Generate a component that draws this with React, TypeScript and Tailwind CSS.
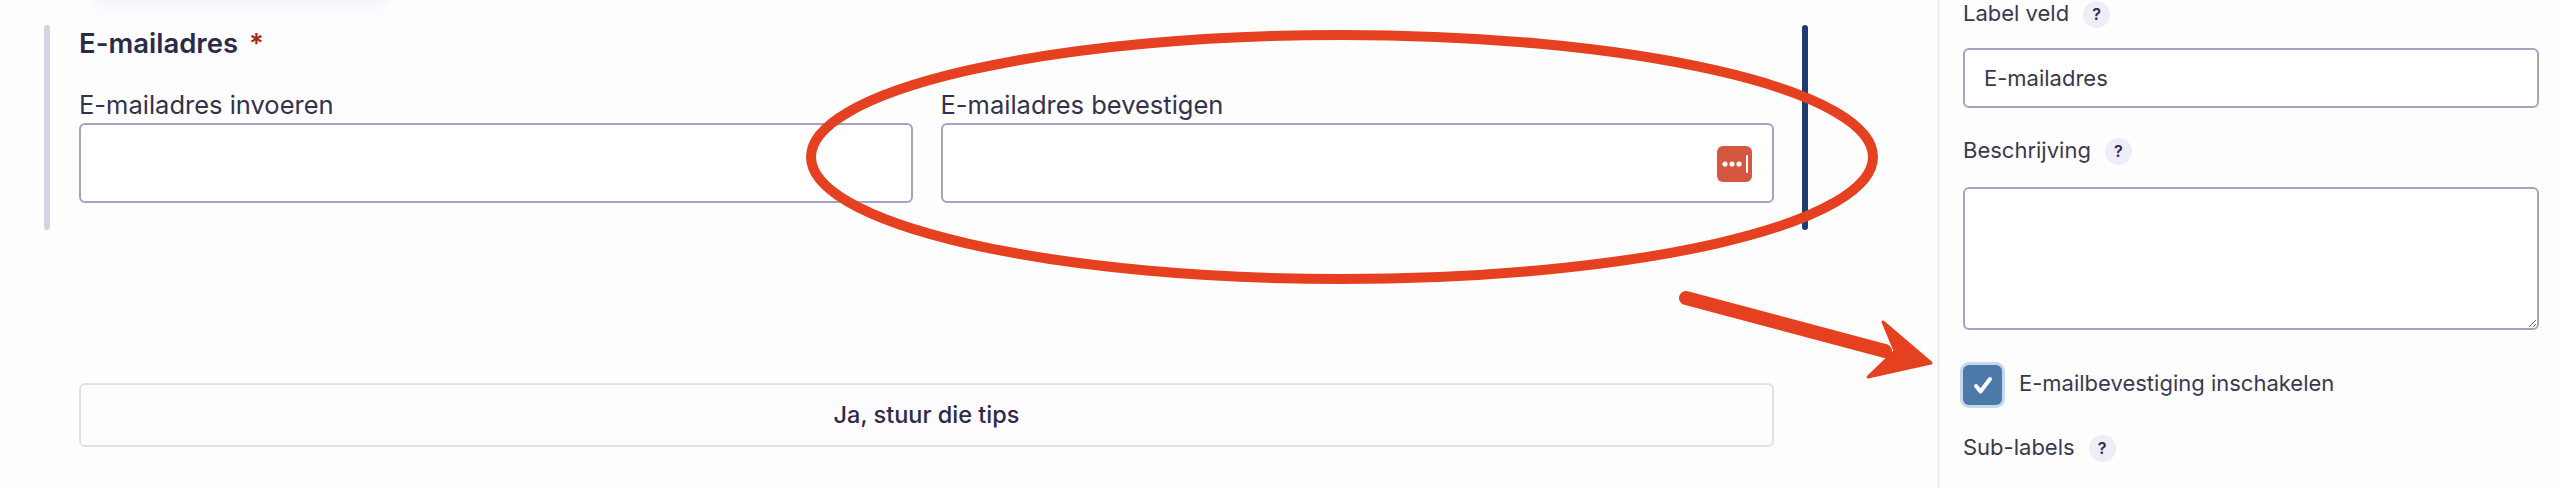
const font = "font-['Inter',sans-serif]";

function HelpBadge() {
  return (
    <span className="ml-[14px] flex h-[27px] w-[27px] items-center justify-center rounded-full bg-[#eeedf8] text-[16px] font-semibold text-[#2c2a4a]">
      ?
    </span>
  );
}

function SideLabel({ children }: { children: string }) {
  return (
    <div className="flex h-[27px] items-center text-[22px] leading-[27px] text-[#3a3850]">
      <span className="-mt-[2px]">{children}</span>
      <HelpBadge />
    </div>
  );
}

function EmailField({ label, manager }: { label: string; manager?: boolean }) {
  return (
    <div>
      <label className="block text-[25.5px] leading-[32px] text-[#33314e]">{label}</label>
      <div className="relative mt-[2px]">
        <input
          readOnly
          className="block h-[80px] w-full rounded-[6px] border-2 border-[#a5a3c2] bg-white"
        />
        {manager && (
          <svg
            viewBox="0 0 35 36"
            className="absolute right-[22px] top-[23px] h-[36px] w-[35px]"
          >
            <rect width="35" height="36" rx="6" fill="#d5573f" />
            <circle cx="8" cy="18" r="2.6" fill="#fff" />
            <circle cx="15" cy="18" r="2.6" fill="#fff" />
            <circle cx="22" cy="18" r="2.6" fill="#fff" />
            <rect x="29" y="9" width="2" height="18" fill="#fff" />
          </svg>
        )}
      </div>
    </div>
  );
}

export default function App() {
  return (
    <div className={`${font} relative flex h-[488px] w-[2560px] overflow-hidden bg-[#fefefe]`}>
      {/* faint shadow of the card scrolled off the top */}
      <div className="absolute left-[90px] top-[-24px] h-[30px] w-[300px] rounded-full bg-[#f3f0fa] blur-[8px]" />

      <main className="w-[1937px] pl-[44px] pt-[25px]">
        <div className="flex h-[205px]">
          <div className="w-[6px] rounded-full bg-[#d4d3e8]" />
          <div className="ml-[29px] w-[1695px]">
            <div className="flex h-[36px] items-center text-[27.5px] font-semibold leading-[36px] text-[#2c2a4a]">
              E-mailadres
              <span className="ml-[11px] text-[#a5281b]">*</span>
            </div>
            <div className="mt-[28px] grid grid-cols-2 gap-[28px]">
              <EmailField label="E-mailadres invoeren" />
              <EmailField label="E-mailadres bevestigen" manager />
            </div>
          </div>
          <div className="ml-[28px] w-[6px] rounded-full bg-[#1d3d73]" />
        </div>

        <button className="ml-[35px] mt-[153px] block h-[64px] w-[1695px] rounded-[6px] border-2 border-[#e2dfe9] bg-[#fefcff] text-[23.5px] font-medium text-[#2c2a4a]">
          Ja, stuur die tips
        </button>
      </main>

      <aside className="w-[623px] border-l-[3px] border-[#f0f0f5] pl-[23px] pr-[21px] pt-[1px]">
        <SideLabel>Label veld</SideLabel>
        <input
          readOnly
          defaultValue="E-mailadres"
          className="mt-[20px] block h-[60px] w-full rounded-[6px] border-2 border-[#a5a3c2] bg-white pl-[19px] text-[22px] text-[#3a3850]"
        />
        <div className="mt-[30px]">
          <SideLabel>Beschrijving</SideLabel>
        </div>
        <textarea
          readOnly
          className="mt-[22px] block h-[143px] w-full rounded-[6px] border-2 border-[#a5a3c2] bg-white"
        />
        <div className="mt-[35px] flex items-center">
          <span className="flex h-[40px] w-[39px] items-center justify-center rounded-[6px] bg-[#4d79a8] ring-[3px] ring-[#c5d9ee]">
            <svg viewBox="0 0 24 24" className="h-[24px] w-[24px]" fill="none" stroke="#fff" strokeWidth="4" strokeLinecap="round" strokeLinejoin="round">
              <path d="M5 13l4.5 5.5L19 6" />
            </svg>
          </span>
          <span className="-mt-[3px] ml-[17px] text-[22px] text-[#3a3850]">E-mailbevestiging inschakelen</span>
        </div>
        <div className="mt-[30px]">
          <SideLabel>Sub-labels</SideLabel>
        </div>
      </aside>

      {/* hand-drawn annotation over the screenshot */}
      <svg viewBox="0 0 2560 488" className="pointer-events-none absolute inset-0 h-[488px] w-[2560px]">
        <ellipse cx="1342" cy="157" rx="531" ry="122" fill="none" stroke="#e5401f" strokeWidth="10" />
        <path d="M1686 298L1885 351" fill="none" stroke="#e5401f" strokeWidth="14" strokeLinecap="round" />
        <path d="M1883 322L1931 363L1868 377L1895 351Z" fill="#e5401f" stroke="#e5401f" strokeWidth="3" strokeLinejoin="round" />
      </svg>
    </div>
  );
}
